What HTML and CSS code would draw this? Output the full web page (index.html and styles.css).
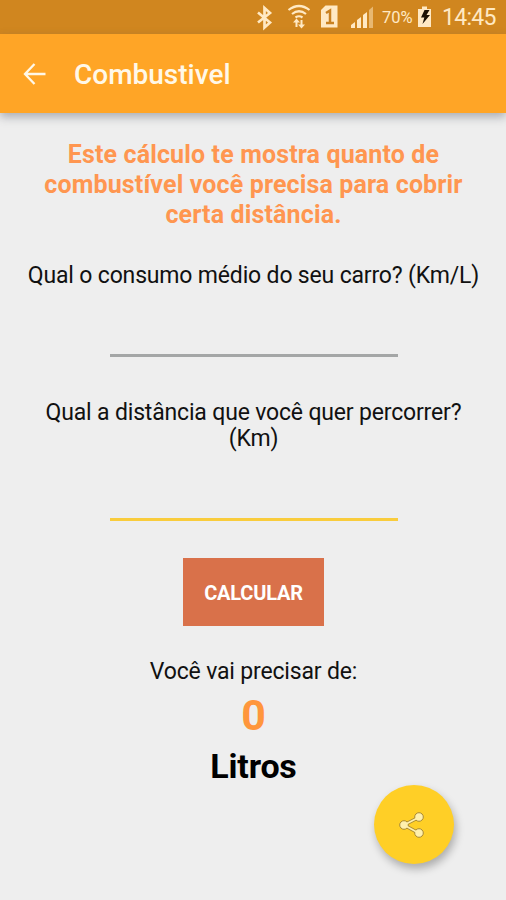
FILE: index.html
```html
<!DOCTYPE html>
<html lang="pt-BR">
<head>
<meta charset="utf-8">
<title>Combustivel</title>
<link rel="stylesheet" href="styles.css">
</head>
<body>
<div class="status">
  <svg class="status-icons" width="120" height="34" viewBox="256 0 120 34">
    <path d="M258 12.500l12 10-5.500 5V8l5.500 5L258 22.500" fill="none" stroke="#ffe9c4" stroke-width="2.700"/>
    <g fill="none" stroke="#ffe9c4" stroke-width="2.200">
      <path d="M288.500 10q10.500-8 21 0M292 14q7-5.500 14 0M295.500 17.500q3.500-2.500 7 0"/>
      <path d="M296.500 27v-6M301.500 20v6" stroke-width="2"/>
    </g>
    <path d="M293 22.500l3.500-4 3.500 4zM298 24.500l3.500 4 3.500-4z" fill="#ffe9c4"/>
    <path d="M321 10l4.500-4.500h12v22H321z" fill="#ffe9c4"/>
    <path d="M326 13l4-2.500V23M326 23h8" fill="none" stroke="#c98120" stroke-width="2.500"/>
    <path d="M351 28v-3l4-3v6zM357 28v-8l4-3v11z" fill="#ffe9c4"/>
    <path d="M363 28V15l4-3v16z" fill="#ffe9c4"/>
    <path d="M369 28V10l4-3.500V28z" fill="#ffe9c4" opacity=".5"/>
  </svg>
  <span class="percent">70%</span>
  <svg class="battery" width="16" height="34" viewBox="0 0 16 34">
    <path d="M1 9h4V6.500h5V9h4v18H1z" fill="#ffe9c4"/>
    <path d="M7.500 10h5L9.500 15h3.500l-7.500 9 1.800-6.500H4z" fill="#1d1203"/>
  </svg>
  <span class="clock">14:45</span>
</div>
<header class="appbar">
  <svg class="back" width="24" height="24" viewBox="0 0 24 24"><path d="M22.500 12H2M11.500 2L2 12l9.500 10" fill="none" stroke="#fff8e8" stroke-width="2.300"/></svg>
  <h1 class="title">Combustivel</h1>
</header>
<main class="content">
  <p class="intro">Este cálculo te mostra quanto de<br>combustível você precisa para cobrir<br>certa distância.</p>
  <label class="question" for="consumo">Qual o consumo médio do seu carro? (Km/L)</label>
  <input class="field" id="consumo" type="text">
  <label class="question question-distance" for="distancia">Qual a distância que você quer percorrer?<br>(Km)</label>
  <input class="field field-active" id="distancia" type="text">
  <button class="calculate">CALCULAR</button>
  <p class="result-label">Você vai precisar de:</p>
  <p class="result">0</p>
  <p class="unit">Litros</p>
</main>
<button class="share" aria-label="Compartilhar">
  <svg width="30" height="30" viewBox="0 0 30 30">
    <g stroke="#a98a35" fill="#fff0ae">
      <path d="M7 15L21.500 7.500M7 15l14.500 8" stroke-width="3.600"/>
      <circle cx="7" cy="15" r="4.300"/><circle cx="22" cy="7" r="4.300"/><circle cx="22" cy="23" r="4.300"/>
    </g>
    <path d="M7 15L21.500 7.500M7 15l14.500 8" fill="none" stroke="#fff0ae" stroke-width="1.800"/>
  </svg>
</button>
</body>
</html>
```
FILE: styles.css
```css
* { box-sizing: border-box; }
body {
  margin: 0;
  width: 506px;
  height: 900px;
  overflow: hidden;
  background: #eeeeee;
  color: #111;
  font-family: Roboto, sans-serif;
}
p, h1 { margin: 0; }
.status {
  display: flex;
  height: 34px;
  padding-left: 256px;
  background: #d0861f;
  color: #ffe9c4;
  line-height: 36px;
  white-space: nowrap;
}
.status-icons { flex: none; }
.percent { width: 41px; padding-left: 6px; font-size: 16.5px; }
.battery { flex: none; }
.clock { padding-left: 9px; font-size: 23px; letter-spacing: -.7px; }
.appbar {
  display: flex;
  align-items: center;
  gap: 27px;
  height: 79px;
  padding-left: 23px;
  background: #ffa526;
  box-shadow: 0 4px 9px rgba(70, 75, 90, .4);
}
.title { padding-top: 2px; color: #fff8e8; font-size: 28px; font-weight: 500; line-height: 32px; }
.content {
  display: flex;
  flex-direction: column;
  align-items: center;
  padding: 27px 0 0 1px;
  text-align: center;
  white-space: nowrap;
}
.intro { color: #ff9650; font-size: 25px; font-weight: 700; line-height: 30px; letter-spacing: .13px; }
.question, .result-label { font-size: 23px; line-height: 26px; letter-spacing: -.17px; }
.question { margin-top: 33px; }
.field {
  width: 288px;
  height: 68px;
  padding: 0;
  border: 0;
  border-bottom: 3px solid #a4a6a6;
  background: transparent;
  font: 23px Roboto, sans-serif;
  outline: 0;
}
.question-distance { margin-top: 43px; }
.field-active { height: 69px; border-color: #f9cc3c; }
.calculate {
  width: 141px;
  height: 68px;
  margin-top: 37px;
  padding: 2px 0 0;
  border: 0;
  background: #d9714a;
  color: #fff;
  font: 700 20px Roboto, sans-serif;
  letter-spacing: -.2px;
}
.result-label { margin-top: 33px; }
.result { margin-top: 5px; color: #ff963c; font-size: 43px; font-weight: 700; line-height: 50px; }
.unit { margin-top: 6px; color: #000; font-size: 34px; font-weight: 700; line-height: 40px; letter-spacing: -.2px; }
.share {
  position: absolute;
  left: 374px;
  top: 785px;
  display: grid;
  place-items: center;
  width: 80px;
  height: 79px;
  padding: 0 4px 0 0;
  border: 0;
  border-radius: 50%;
  background: #ffcf26;
  box-shadow: 2px 5px 8px rgba(0, 0, 0, .28);
}
```
